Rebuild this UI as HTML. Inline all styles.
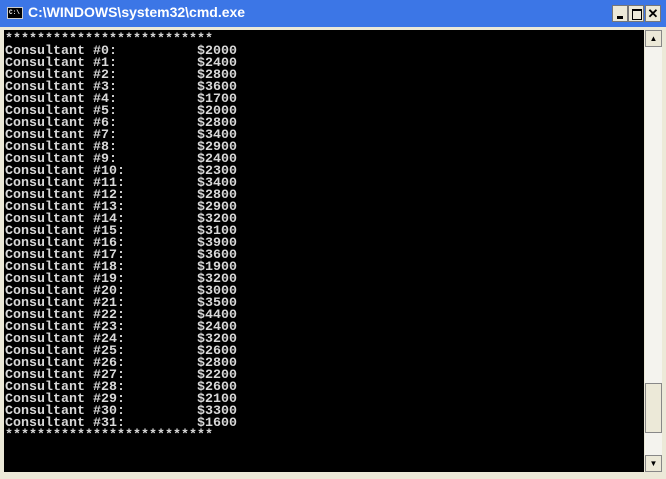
<!DOCTYPE html>
<html><head><style>
body{margin:0;width:666px;height:479px;overflow:hidden;background:#ece9d8;position:relative;font-family:"Liberation Sans",sans-serif}
.title{position:absolute;left:0;top:0;width:666px;height:27px;background:#3c76e6}
.title span{position:absolute;left:28px;top:4px;color:#fff;font-weight:bold;font-size:14px}
.icon{position:absolute;left:7px;top:7px;width:16px;height:12px;background:#000;border:1px solid #ccc;box-sizing:border-box;color:#fff;font:bold 6px "Liberation Mono",monospace;line-height:9px;text-indent:1px}
.btn{position:absolute;top:5px;width:16px;height:17px;background:#ece9d8;border:1px solid #777;box-sizing:border-box}
.con{position:absolute;left:4px;top:30px;width:640px;height:442px;background:#000}
pre{margin:0;position:absolute;left:1px;top:4px;color:#d8d8d8;font:bold 13.33px/12px "Liberation Mono",monospace;letter-spacing:0}
.sb{position:absolute;left:645px;top:30px;width:17px;height:442px;background:#f4f3ee}
.ar{position:absolute;left:0;width:17px;height:17px;background:#ece9d8;border:1px solid #888;box-sizing:border-box;font-size:8px;text-align:center;line-height:15px}
</style></head><body>
<div class="title"><div class="icon">C:\</div><span>C:\WINDOWS\system32\cmd.exe</span>
<div class="btn" style="left:612px"><div style="position:absolute;left:4px;top:10px;width:6px;height:3px;background:#000"></div></div>
<div class="btn" style="left:628px"><div style="position:absolute;left:3px;top:3px;width:8px;height:8px;border:1px solid #000;border-top-width:2px"></div></div>
<div class="btn" style="left:645px;font-weight:bold;font-size:13px;text-align:center;line-height:15px">✕</div>
</div>
<div class="con"><pre>**************************
Consultant #0:          $2000
Consultant #1:          $2400
Consultant #2:          $2800
Consultant #3:          $3600
Consultant #4:          $1700
Consultant #5:          $2000
Consultant #6:          $2800
Consultant #7:          $3400
Consultant #8:          $2900
Consultant #9:          $2400
Consultant #10:         $2300
Consultant #11:         $3400
Consultant #12:         $2800
Consultant #13:         $2900
Consultant #14:         $3200
Consultant #15:         $3100
Consultant #16:         $3900
Consultant #17:         $3600
Consultant #18:         $1900
Consultant #19:         $3200
Consultant #20:         $3000
Consultant #21:         $3500
Consultant #22:         $4400
Consultant #23:         $2400
Consultant #24:         $3200
Consultant #25:         $2600
Consultant #26:         $2800
Consultant #27:         $2200
Consultant #28:         $2600
Consultant #29:         $2100
Consultant #30:         $3300
Consultant #31:         $1600
**************************</pre></div>
<div class="sb">
<div class="ar" style="top:0">▲</div>
<div style="position:absolute;left:0;top:353px;width:17px;height:50px;background:#ece9d8;border:1px solid #888;box-sizing:border-box"></div>
<div class="ar" style="top:425px">▼</div>
</div>
</body></html>
